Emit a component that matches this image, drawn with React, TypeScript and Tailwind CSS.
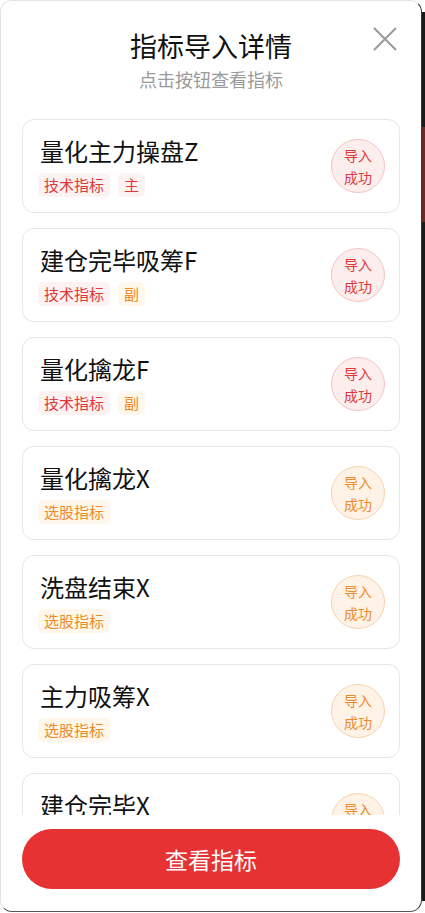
import React from 'react';

type Item = {
  name: string;
  tags: { label: string; tone: 'red' | 'orange' }[];
  tone: 'red' | 'orange';
};

const items: Item[] = [
  { name: '量化主力操盘Z', tags: [{ label: '技术指标', tone: 'red' }, { label: '主', tone: 'red' }], tone: 'red' },
  { name: '建仓完毕吸筹F', tags: [{ label: '技术指标', tone: 'red' }, { label: '副', tone: 'orange' }], tone: 'red' },
  { name: '量化擒龙F', tags: [{ label: '技术指标', tone: 'red' }, { label: '副', tone: 'orange' }], tone: 'red' },
  { name: '量化擒龙X', tags: [{ label: '选股指标', tone: 'orange' }], tone: 'orange' },
  { name: '洗盘结束X', tags: [{ label: '选股指标', tone: 'orange' }], tone: 'orange' },
  { name: '主力吸筹X', tags: [{ label: '选股指标', tone: 'orange' }], tone: 'orange' },
  { name: '建仓完毕X', tags: [{ label: '选股指标', tone: 'orange' }], tone: 'orange' },
];

const Tag = ({ label, tone }: { label: string; tone: 'red' | 'orange' }) => (
  <span
    className={
      tone === 'red'
        ? 'h-[24px] px-[6px] rounded-[6px] bg-[#fdf2f2] text-[#e0383a] text-[15px] leading-[24px]'
        : 'h-[24px] px-[6px] rounded-[6px] bg-[#fff6ec] text-[#ef8a25] text-[15px] leading-[24px]'
    }
  >
    {label}
  </span>
);

const Badge = ({ tone }: { tone: 'red' | 'orange' }) => (
  <div
    className={
      tone === 'red'
        ? 'w-[54px] h-[54px] rounded-full border border-[#f4c3c3] bg-[#fdeeee] text-[#e0383a] flex flex-col items-center justify-center text-[14px] leading-[22px] shrink-0'
        : 'w-[54px] h-[54px] rounded-full border border-[#f7d3ac] bg-[#fff3e7] text-[#ee8a2b] flex flex-col items-center justify-center text-[14px] leading-[22px] shrink-0'
    }
  >
    <span>导入</span>
    <span>成功</span>
  </div>
);

const App = () => {
  return (
    <div
      className="relative w-[425px] h-[913px] bg-white overflow-hidden"
      style={{ fontFamily: "'Noto Sans CJK SC', 'Noto Sans', sans-serif" }}
    >
      {/* backdrop sliver on the right */}
      <div className="absolute right-0 top-[12px] bottom-[12px] w-[3px] bg-[#1a1a1a]">
        <div className="mt-[115px] h-[95px] bg-[#6b2a22]" />
      </div>

      <div className="w-[422px] h-[912px] rounded-[12px] border border-[#e2e2e2] border-r-[#3a3a3a] border-b-[#555] bg-white flex flex-col relative">
        <button className="absolute right-[24px] top-[26px] text-[#9a9a9a]">
          <svg width="24" height="24" viewBox="0 0 24 24" fill="none" stroke="currentColor" strokeWidth="2">
            <path d="M1 1 L23 23 M23 1 L1 23" />
          </svg>
        </button>

        <div className="pt-[28px] flex flex-col items-center">
          <h2 className="text-[27px] leading-[34px] font-normal text-[#111]">指标导入详情</h2>
          <p className="mt-[4px] text-[18px] leading-[24px] text-[#9a9a9a]">点击按钮查看指标</p>
        </div>

        <div className="mt-[28px] mx-[21px] h-[696px] overflow-hidden flex flex-col gap-[15px]">
          {items.map((item) => (
            <div
              key={item.name}
              className="shrink-0 h-[94px] rounded-[12px] border border-[#e6e6e6] pl-[17px] pr-[14px] flex items-center justify-between"
            >
              <div className="flex flex-col">
                <div className="text-[24px] leading-[30px] text-[#111]">{item.name}</div>
                <div className="mt-[7px] -ml-[2px] flex gap-[8px]">
                  {item.tags.map((t) => (
                    <Tag key={t.label} label={t.label} tone={t.tone} />
                  ))}
                </div>
              </div>
              <Badge tone={item.tone} />
            </div>
          ))}
        </div>

        <button className="mt-[14px] mx-[21px] h-[60px] rounded-full bg-[#e63232] text-white text-[23px]">
          查看指标
        </button>
      </div>
    </div>
  );
};

export default App;
